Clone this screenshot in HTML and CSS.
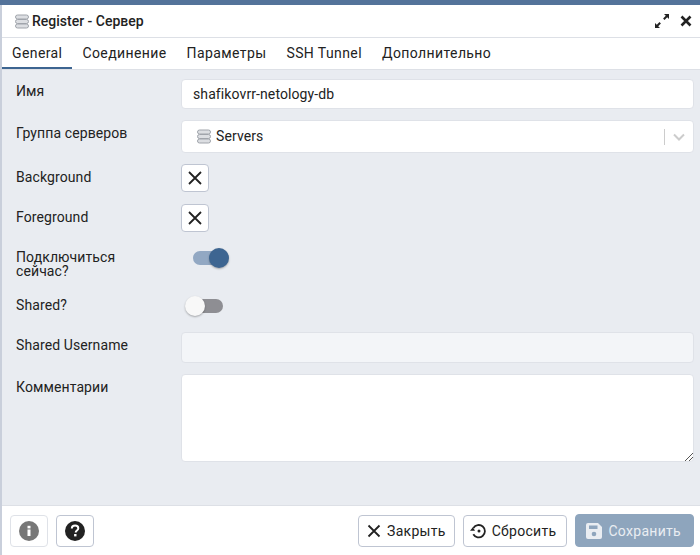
FILE: index.html
```html
<!DOCTYPE html>
<html lang="en">
<head>
  <meta charset="UTF-8">
  <title>Register - Сервер</title>
  <link rel="stylesheet" href="styles.css">
</head>
<body>
  <div class="topbar"></div>
  <div class="dialog">
    <div class="titlebar">
      <svg class="server-icon" viewBox="0 0 14 15" width="14" height="15">
        <rect class="disk" x="0.500" y="1" width="13" height="4" rx="2"/>
        <rect class="disk" x="0.500" y="5.500" width="13" height="4" rx="2"/>
        <rect class="disk" x="0.500" y="10" width="13" height="4" rx="2"/>
      </svg>
      <span class="title">Register - Сервер</span>
      <svg class="expand" viewBox="0 0 14 14" width="14" height="14">
        <path d="M9 0h5v5l-1.800-1.800L9.500 5.900 8.100 4.500l2.700-2.700zM5 14H0V9l1.800 1.800 2.700-2.700 1.400 1.400-2.700 2.700z"/>
      </svg>
      <svg class="close" viewBox="0 0 12 12" width="12" height="12">
        <path d="M1.500 1.500l9 9M10.500 1.500l-9 9"/>
      </svg>
    </div>

    <div class="tabs">
      <div class="tab active">General</div>
      <div class="tab">Соединение</div>
      <div class="tab">Параметры</div>
      <div class="tab">SSH Tunnel</div>
      <div class="tab">Дополнительно</div>
    </div>

    <div class="form">
      <div class="row row-name">
        <label>Имя</label>
        <div class="input">shafikovrr-netology-db</div>
      </div>
      <div class="row row-group">
        <label>Группа серверов</label>
        <div class="input select">
          <svg class="server-icon small" viewBox="0 0 14 15" width="14" height="15">
            <rect class="disk" x="0.500" y="1" width="13" height="4" rx="2"/>
            <rect class="disk" x="0.500" y="5.500" width="13" height="4" rx="2"/>
            <rect class="disk" x="0.500" y="10" width="13" height="4" rx="2"/>
          </svg>
          <span class="select-value">Servers</span>
          <span class="select-sep"></span>
          <svg class="chevron" viewBox="0 0 12 8" width="12" height="8">
            <path d="M1 1.500l5 5 5-5"/>
          </svg>
        </div>
      </div>
      <div class="row row-color">
        <label>Background</label>
        <div class="color-btn">
          <svg viewBox="0 0 16 16" width="16" height="16"><path d="M2 2l12 12M14 2L2 14"/></svg>
        </div>
      </div>
      <div class="row row-color">
        <label>Foreground</label>
        <div class="color-btn">
          <svg viewBox="0 0 16 16" width="16" height="16"><path d="M2 2l12 12M14 2L2 14"/></svg>
        </div>
      </div>
      <div class="row row-connect">
        <label class="two-line">Подключиться<br>сейчас?</label>
        <div class="switch on"><span class="knob"></span></div>
      </div>
      <div class="row row-shared">
        <label>Shared?</label>
        <div class="switch off"><span class="knob"></span></div>
      </div>
      <div class="row row-username">
        <label>Shared Username</label>
        <div class="input disabled"></div>
      </div>
      <div class="row row-comments">
        <label>Комментарии</label>
        <div class="input textarea">
          <svg class="grip" viewBox="0 0 8 8" width="8" height="8"><path d="M0 8l8-8M4 8l4-4"/></svg>
        </div>
      </div>
    </div>

    <div class="footer">
      <div class="btn icon-btn faded">
        <svg viewBox="0 0 20 20" width="20" height="20">
          <circle cx="10" cy="10" r="10" fill="#777"/>
          <rect x="8.500" y="8.500" width="3" height="6.500" fill="#fff"/>
          <rect x="8.500" y="4.800" width="3" height="2.600" fill="#fff"/>
        </svg>
      </div>
      <div class="btn icon-btn">
        <svg viewBox="0 0 20 20" width="20" height="20">
          <circle cx="10" cy="10" r="10" fill="#222"/>
          <path d="M6.800 7.600c0-2 1.500-3 3.300-3s3.200 1 3.200 2.700c0 2.300-2.600 2.200-2.600 4.200" fill="none" stroke="#fff" stroke-width="2"/>
          <rect x="9.100" y="13" width="2.400" height="2.400" fill="#fff"/>
        </svg>
      </div>
      <div class="spacer"></div>
      <div class="btn text-btn btn-close">
        <svg class="btn-x" viewBox="0 0 14 14" width="14" height="14"><path d="M1.500 1.500l11 11M12.500 1.500l-11 11"/></svg>
        Закрыть
      </div>
      <div class="btn text-btn btn-reset">
        <svg viewBox="0 0 16 16" width="16" height="16">
          <path class="arc" d="M3.400 5A6.200 6.200 0 1 1 3.300 11.200"/>
          <path class="fill" d="M0 7.800h5L2.900 4.300z"/>
          <circle class="fill" cx="9" cy="8" r="1.500"/>
        </svg>
        Сбросить
      </div>
      <div class="btn save-btn">
        <svg viewBox="0 0 16 16" width="16" height="16">
          <path fill="#e9edf2" d="M2 0h10l4 4v10a2 2 0 0 1-2 2H2a2 2 0 0 1-2-2V2a2 2 0 0 1 2-2z"/>
          <rect x="3" y="2.500" width="8.500" height="3.500" fill="#8ea5bd"/>
          <circle cx="8" cy="11" r="2.300" fill="#8ea5bd"/>
        </svg>
        Сохранить
      </div>
    </div>
  </div>
</body>
</html>
```

FILE: styles.css
```css
html, body {
  margin: 0;
  height: 100%;
}
body {
  font-family: Roboto, "Liberation Sans", sans-serif;
  font-size: 14px;
  color: #222;
  background: #c9cfdb;
  display: flex;
  flex-direction: column;
  overflow: hidden;
}
.topbar {
  height: 5px;
  background: #54739a;
  flex: none;
}
.dialog {
  flex: 1;
  margin-left: 2px;
  display: flex;
  flex-direction: column;
  background: #fff;
  min-height: 0;
}
.titlebar {
  height: 32px;
  display: flex;
  align-items: center;
  padding: 0 8px 0 13px;
  border-bottom: 1px solid #dde0e6;
  flex: none;
}
.server-icon {
  flex: none;
  margin-right: 3px;
}
.disk {
  fill: #dcdee2;
  stroke: #a0a4ab;
  stroke-width: 1;
}
.title {
  font-weight: 500;
  flex: 1;
}
.expand {
  fill: #222;
  margin-right: 11px;
}
.close {
  stroke: #222;
  stroke-width: 2.600;
  fill: none;
}
.tabs {
  height: 31px;
  display: flex;
  border-bottom: 1px solid #dde0e6;
  flex: none;
}
.tab {
  padding: 0 10px;
  line-height: 30px;
  letter-spacing: 0.400px;
}
.tab.active {
  box-shadow: inset 0 -2px 0 #3d6591;
}
.form {
  flex: 1;
  background: #e9ecf1;
  padding: 9px 6px 0 14px;
  border-bottom: 1px solid #dde0e6;
}
.row {
  display: grid;
  grid-template-columns: 165px 1fr;
}
.row label {
  padding-top: 4px;
  line-height: 16px;
  letter-spacing: 0.100px;
}
.row-name {
  margin-bottom: 11px;
}
.row-group {
  margin-bottom: 11px;
}
.row-group label {
  padding-top: 5px;
}
.row-color {
  margin-bottom: 12px;
}
.row-color label {
  padding-top: 5px;
}
.row-connect {
  height: 35px;
  margin-bottom: 14px;
}
.row .two-line {
  line-height: 14px;
  padding-top: 6px;
}
.row-shared {
  height: 20px;
  margin-bottom: 19px;
}
.row-shared label {
  padding-top: 4px;
}
.row-username {
  margin-bottom: 11px;
}
.row-username label {
  padding-top: 5px;
}
.row-comments label {
  padding-top: 5px;
}
.input {
  height: 30px;
  box-sizing: border-box;
  background: #fff;
  border: 1px solid #dfe2e8;
  border-radius: 4px;
  padding: 0 11px;
  line-height: 28px;
  letter-spacing: 0.100px;
}
.select {
  height: 33px;
  display: flex;
  align-items: center;
  padding-left: 15px;
  padding-right: 8px;
}
.server-icon.small {
  margin-right: 5px;
  margin-top: -1px;
}
.select-value {
  flex: 1;
  margin-top: -1px;
}
.select-sep {
  width: 1px;
  height: 16px;
  background: #ccc;
  margin-right: 8px;
}
.chevron {
  fill: none;
  stroke: #ccc;
  stroke-width: 2;
}
.color-btn {
  width: 28px;
  height: 28px;
  box-sizing: border-box;
  background: #fff;
  border: 1px solid #bfc5d2;
  border-radius: 4px;
  display: flex;
  align-items: center;
  justify-content: center;
}
.color-btn svg {
  stroke: #222;
  stroke-width: 1.800;
  fill: none;
}
.switch {
  position: relative;
  width: 30px;
  height: 14px;
  border-radius: 7px;
  align-self: start;
}
.switch.on {
  background: #92a8c3;
  margin: 7px 0 0 12px;
}
.switch.off {
  background: #8e8e93;
  margin: 6px 0 0 12px;
}
.knob {
  position: absolute;
  top: -3px;
  width: 20px;
  height: 20px;
  border-radius: 50%;
  box-shadow: 0 1px 2px rgba(0,0,0,0.3);
}
.switch.on .knob {
  right: -6px;
  background: #3d6591;
}
.switch.off .knob {
  left: -8px;
  background: #f8f8f8;
}
.disabled {
  height: 31px;
  background: #f3f5f8;
}
.textarea {
  height: 88px;
  position: relative;
}
.grip {
  position: absolute;
  right: 0;
  bottom: 0;
  stroke: #555;
  stroke-width: 1;
  fill: none;
}
.footer {
  height: 49px;
  display: flex;
  align-items: center;
  padding: 0 6px 0 8px;
  gap: 8px;
  flex: none;
}
.spacer {
  flex: 1;
}
.btn {
  height: 32px;
  box-sizing: border-box;
  border: 1px solid #bfc5d2;
  border-radius: 4px;
  background: #fff;
  display: flex;
  align-items: center;
  justify-content: center;
  letter-spacing: 0.300px;
}
.icon-btn {
  width: 38px;
}
.icon-btn.faded {
  border-color: #dfe2e8;
}
.text-btn {
  gap: 6px;
}
.btn-close {
  padding: 0 8px;
}
.btn-reset {
  padding: 0 10px 0 6px;
}
.btn-x {
  stroke: #222;
  stroke-width: 1.800;
  fill: none;
}
.arc {
  fill: none;
  stroke: #222;
  stroke-width: 1.800;
}
.fill {
  fill: #222;
}
.save-btn {
  height: 33px;
  gap: 6px;
  padding: 0 12px 0 10px;
  background: #8ea5bd;
  border-color: #8ea5bd;
  color: #e9edf2;
}
```
